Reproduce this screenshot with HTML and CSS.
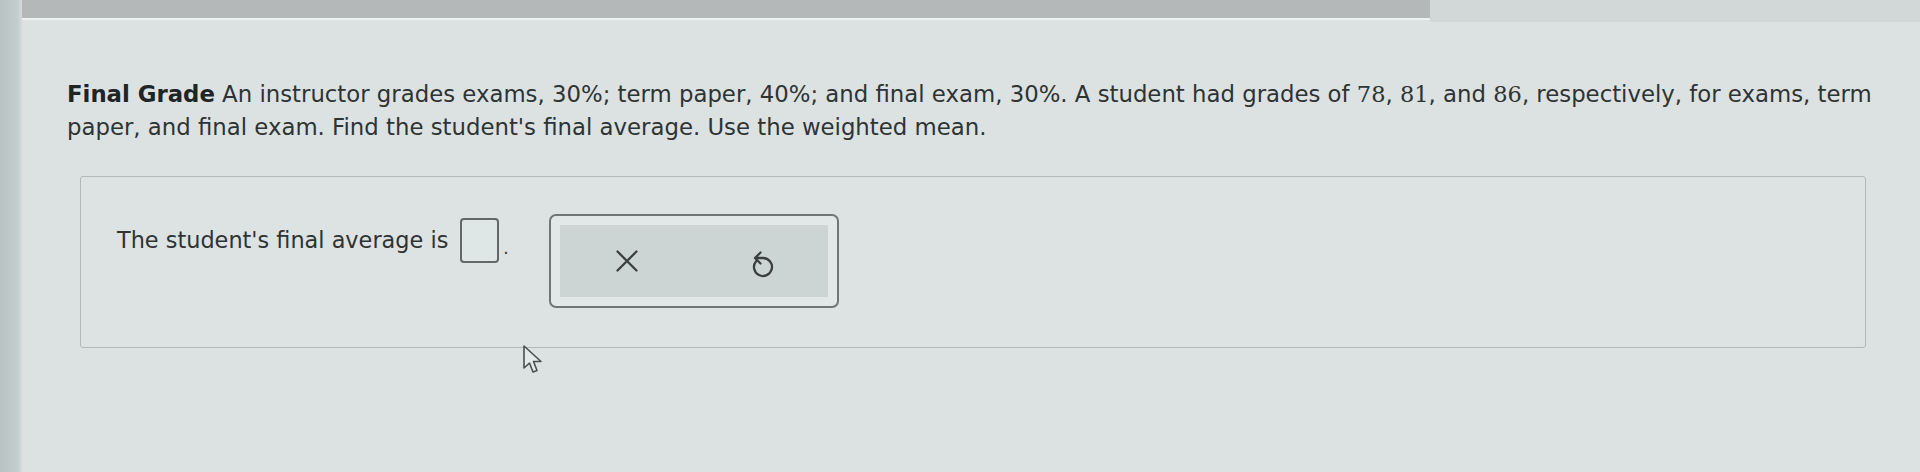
FILE: index.html
```html
<!DOCTYPE html>
<html>
<head>
<meta charset="utf-8">
<link rel="stylesheet" href="styles.css">
</head>
<body>
<div class="screen">
  <div class="edge"></div>
  <div class="main">
    <div class="topbar">
      <div class="topbar-dark"></div>
      <div class="topbar-light"></div>
    </div>
    <p class="question"><b>Final Grade</b> An instructor grades exams, 30%; term paper, 40%; and final exam, 30%. A student had grades of <span class="num">78</span>, <span class="num">81</span>, and <span class="num">86</span>, respectively, for exams, term paper, and final exam. Find the student's final average. Use the weighted mean.</p>
    <div class="answer">
      <div class="row">
        <div class="sentence">
          <span>The student's final average is</span>
          <span class="input"></span>
          <span class="dot">.</span>
        </div>
        <div class="tools">
          <div class="tools-inner">
            <svg class="icon-x" width="24" height="24" viewBox="0 0 24 24"><path d="M2.5 2.5 L21.5 21.5 M21.5 2.5 L2.5 21.5" stroke="#3a4040" stroke-width="2.3" fill="none" stroke-linecap="round"/></svg>
            <svg class="icon-undo" width="22" height="30" viewBox="0 0 22 30"><path d="M8.5 3.5 L3 9 L8.5 14.5 M3 9 H11 A9 9 0 1 1 4.1 12.2" stroke="#3a4040" stroke-width="2.3" fill="none" stroke-linecap="round" stroke-linejoin="round"/></svg>
          </div>
        </div>
      </div>
    </div>
  </div>
</div>
<svg class="cursor" width="24" height="32" viewBox="0 0 24 32"><path d="M2 2 L2 24 L7.5 19 L11 28 L15 26.5 L11.5 17.5 L19 17.5 Z" fill="#e4eaea" stroke="#4a5050" stroke-width="1.6" stroke-linejoin="round"/></svg>
</body>
</html>
```
FILE: styles.css
```css
html, body {
  margin: 0;
  padding: 0;
  background: #dbe1e1;
  width: 1920px;
  height: 472px;
  overflow: hidden;
}
.screen {
  display: flex;
  height: 472px;
}
.edge {
  width: 22px;
  flex: none;
  background: linear-gradient(90deg, #b8c2c2 0%, #c4cdcd 80%, #d6dcdc 100%);
}
.main {
  flex: 1;
  background: #dce2e2;
  font-family: "DejaVu Sans", Verdana, sans-serif;
  color: #2e3333;
}
.topbar {
  display: flex;
  height: 20px;
}
.topbar-dark {
  width: 1408px;
  height: 18px;
  background: #b4b8b8;
  border-bottom: 2px solid #eef1f1;
}
.topbar-light {
  flex: 1;
  height: 22px;
  background: #d2d8d8;
}
.question {
  margin: 58px 20px 0 45px;
  font-size: 22.8px;
  line-height: 33px;
}
.question b {
  color: #1f2424;
}
.num {
  font-family: "DejaVu Serif", "Liberation Serif", serif;
  font-size: 22.5px;
}
.answer {
  margin: 32px 54px 0 58px;
  height: 172px;
  border: 1px solid #b2b8b8;
  border-radius: 3px;
  background: #dde3e3;
  box-sizing: border-box;
  padding: 37px 0 0 36px;
}
.row {
  display: flex;
  align-items: flex-start;
}
.sentence {
  display: flex;
  align-items: center;
  height: 46px;
  margin-top: 3px;
  font-size: 22.4px;
}
.input {
  width: 39px;
  height: 45px;
  box-sizing: border-box;
  border: 2px solid #626868;
  border-radius: 4px;
  background: #dfe6e6;
  margin-left: 12px;
}
.dot {
  margin-left: 4px;
  align-self: flex-end;
  line-height: 30px;
  font-size: 17px;
}
.tools {
  margin-left: 40px;
  width: 290px;
  height: 94px;
  box-sizing: border-box;
  border: 2px solid #707676;
  border-radius: 7px;
  padding: 9px;
  background: #e2e8e8;
}
.tools-inner {
  height: 100%;
  background: #cdd4d4;
  display: flex;
  align-items: center;
  padding-left: 55px;
  box-sizing: border-box;
}
.icon-undo {
  margin-left: 113px;
  margin-top: 6px;
}
.cursor {
  position: absolute;
  left: 522px;
  top: 344px;
}
```
